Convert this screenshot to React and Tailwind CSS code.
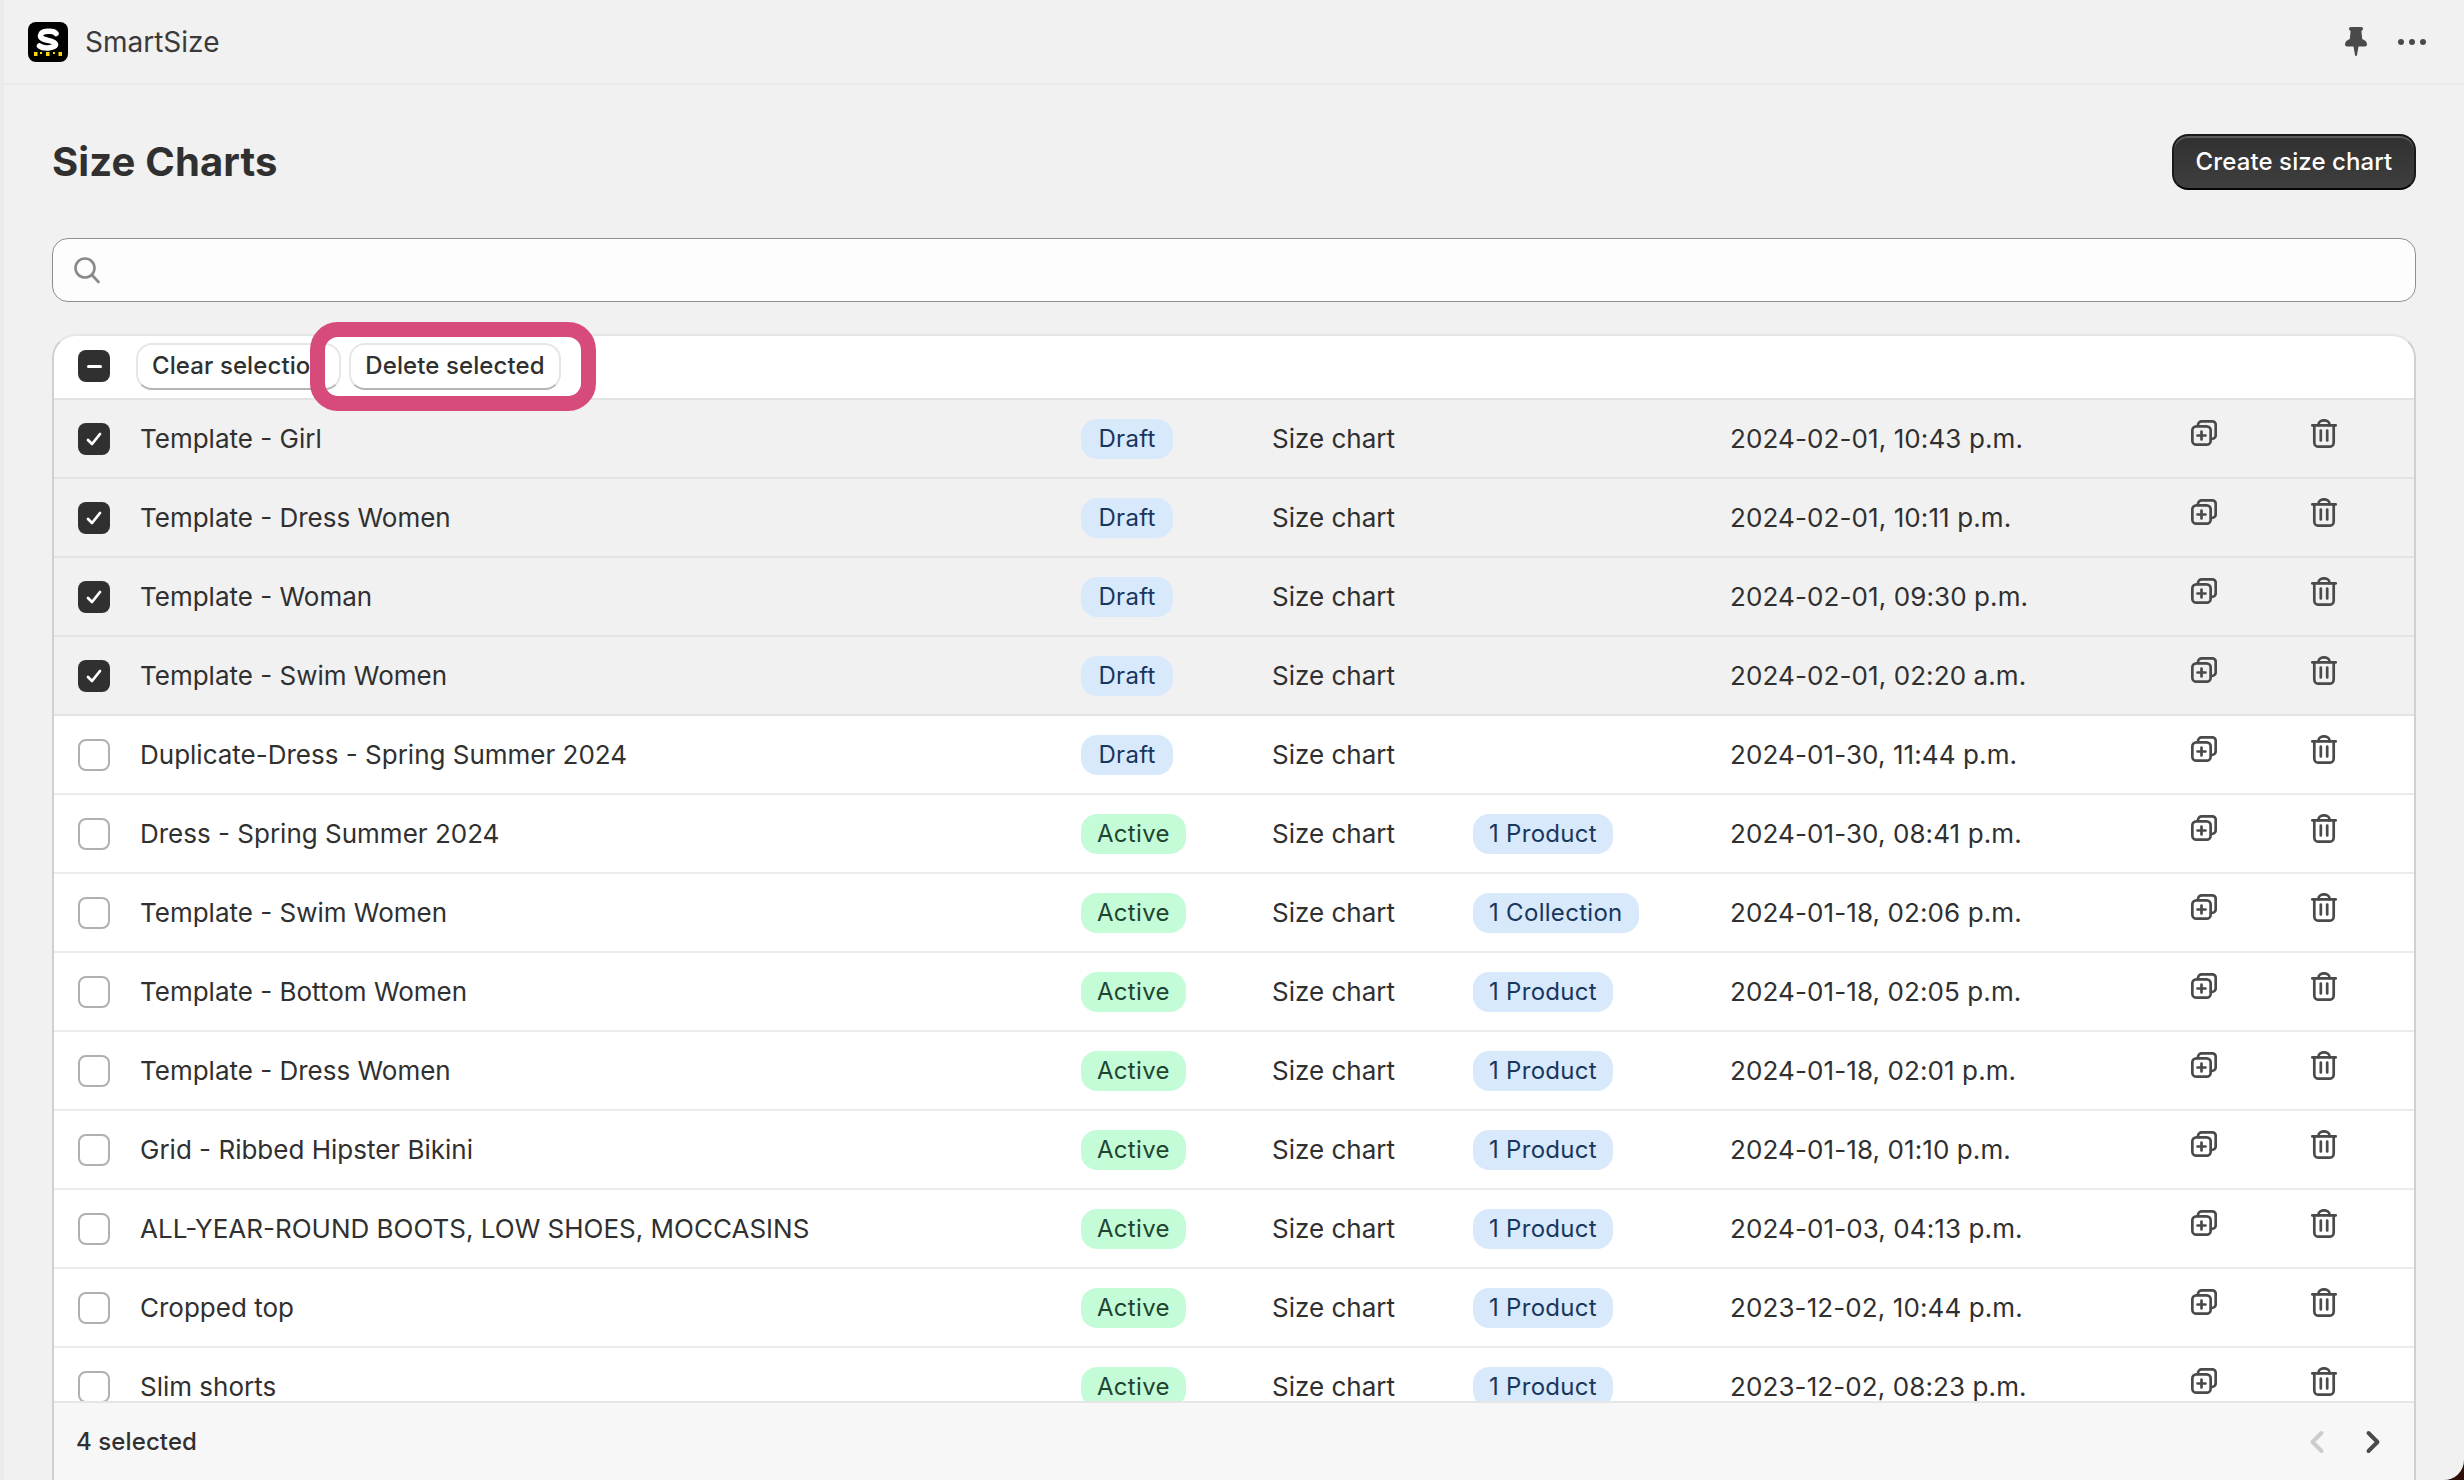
import { ChevronLeft, ChevronRight } from "lucide-react";

const rowGrid = "grid h-[79px] shrink-0 grid-cols-[86px_941px_191px_201px_257px_461px_120px_1fr] items-center border-b-2";

const rows = [
  { name: "Template - Girl", status: "Draft", date: "2024-02-01, 10:43 p.m.", selected: true },
  { name: "Template - Dress Women", status: "Draft", date: "2024-02-01, 10:11 p.m.", selected: true },
  { name: "Template - Woman", status: "Draft", date: "2024-02-01, 09:30 p.m.", selected: true },
  { name: "Template - Swim Women", status: "Draft", date: "2024-02-01, 02:20 a.m.", selected: true },
  { name: "Duplicate-Dress - Spring Summer 2024", status: "Draft", date: "2024-01-30, 11:44 p.m." },
  { name: "Dress - Spring Summer 2024", status: "Active", market: "1 Product", date: "2024-01-30, 08:41 p.m." },
  { name: "Template - Swim Women", status: "Active", market: "1 Collection", date: "2024-01-18, 02:06 p.m." },
  { name: "Template - Bottom Women", status: "Active", market: "1 Product", date: "2024-01-18, 02:05 p.m." },
  { name: "Template - Dress Women", status: "Active", market: "1 Product", date: "2024-01-18, 02:01 p.m." },
  { name: "Grid - Ribbed Hipster Bikini", status: "Active", market: "1 Product", date: "2024-01-18, 01:10 p.m." },
  { name: "ALL-YEAR-ROUND BOOTS, LOW SHOES, MOCCASINS", status: "Active", market: "1 Product", date: "2024-01-03, 04:13 p.m." },
  { name: "Cropped top", status: "Active", market: "1 Product", date: "2023-12-02, 10:44 p.m." },
  { name: "Slim shorts", status: "Active", market: "1 Product", date: "2023-12-02, 08:23 p.m." },
];

function Logo() {
  return (
    <svg width="40" height="40" viewBox="0 0 40 40" className="shrink-0">
      <rect width="40" height="40" rx="8" fill="#000" />
      <path d="M28 11.5C26 8.5 13 8 12.5 13.5C12 19 26 17.5 27.5 22C28.500 26 16 27.500 11.500 24" fill="none" stroke="#fff" strokeWidth="5.500" strokeLinecap="round" />
      <rect x="6" y="30" width="3.500" height="4" fill="#f5d90a" />
      <rect x="12" y="30" width="2" height="2" fill="#f5d90a" />
      <rect x="18" y="30" width="3.500" height="4" fill="#f5d90a" />
      <rect x="25" y="30" width="2" height="2" fill="#f5d90a" />
      <rect x="30.500" y="30" width="3.500" height="4" fill="#f5d90a" />
    </svg>
  );
}

function PinIcon() {
  return (
    <svg width="22" height="29" viewBox="0 0 22 29" className="text-[#4a4a4a]" fill="currentColor">
      <path d="M4 1.800C4 .8 4.800 0 5.800 0h10.400C17.200 0 18 .8 18 1.800c0 1-.7 1.800-1.600 2l.8 8.200c2.600 1 4.800 2.800 4.800 5.400 0 1.200-.9 2-2 2h-6.500L12 28a1 1 0 0 1-2 0L8.500 19.400H2c-1.100 0-2-.8-2-2 0-2.600 2.200-4.400 4.800-5.400l.8-8.200C4.700 3.600 4 2.800 4 1.800z" />
    </svg>
  );
}

function DotsIcon() {
  return (
    <svg width="28" height="8" viewBox="0 0 28 8" className="text-[#4a4a4a]" fill="currentColor">
      <circle cx="3" cy="4" r="3" />
      <circle cx="14" cy="4" r="3" />
      <circle cx="25" cy="4" r="3" />
    </svg>
  );
}

function SearchIcon() {
  return (
    <svg width="28" height="28" viewBox="0 0 28 28" fill="none" stroke="#8a8a8a" strokeWidth="2.600" strokeLinecap="round">
      <circle cx="12" cy="12" r="9.500" />
      <path d="M19 19L25.500 26" />
    </svg>
  );
}

function DuplicateIcon() {
  return (
    <svg width="26" height="26" viewBox="0 0 26 26" fill="none" stroke="#4a4a4a" strokeWidth="2.700" strokeLinecap="round" strokeLinejoin="round">
      <path d="M7 6V5a3.700 3.700 0 0 1 3.700-3.700h10.600A3.400 3.400 0 0 1 24.700 4.700v10.600a3.700 3.700 0 0 1-3.700 3.700h-1" />
      <rect x="1.350" y="6.350" width="18.300" height="18.300" rx="4" />
      <path d="M10.500 11.500v8M6.500 15.500h8" />
    </svg>
  );
}

function TrashIcon() {
  return (
    <svg width="26" height="29" viewBox="0 0 26 29" fill="none" stroke="#4a4a4a" strokeWidth="2.700" strokeLinecap="round" strokeLinejoin="round">
      <path d="M1.300 6.300h23.400" />
      <path d="M7.500 6.300V5.500a5.500 4.200 0 0 1 11 0v.8" />
      <path d="M3.300 6.300V23.500a4.200 4.200 0 0 0 4.200 4.200h11a4.200 4.200 0 0 0 4.200-4.200V6.300" />
      <path d="M9.800 11.500v10M16.200 11.500v10" />
    </svg>
  );
}

function Checkbox({ checked, partial }) {
  if (checked || partial) {
    return (
      <span className="flex h-8 w-8 items-center justify-center rounded-lg bg-[#303030]">
        {checked ? (
          <svg width="20" height="20" viewBox="0 0 20 20" fill="none" stroke="#fff" strokeWidth="2.800" strokeLinecap="round" strokeLinejoin="round">
            <path d="M4 11l4 4 8-10" />
          </svg>
        ) : (
          <span className="h-[3px] w-[15px] rounded-full bg-white" />
        )}
      </span>
    );
  }
  return <span className="block h-8 w-8 rounded-lg border-2 border-[#b0b0b0] bg-white" />;
}

function Badge({ children, green }) {
  return (
    <span className={green ? "inline-flex h-10 items-center rounded-2xl bg-[#c4fcd8] px-4 text-[24px] tracking-[0.3px] text-[#1f4530]" : "inline-flex h-10 items-center rounded-2xl bg-[#d9e9fc] px-4 text-[24px] tracking-[0.3px] text-[#17375c]"}>
      {children}
    </span>
  );
}

function ToolButton({ children, className }) {
  return (
    <button className={"flex h-[47px] items-center rounded-2xl border-2 border-[#e6e6e6] border-b-[#b5b5b5] bg-white px-[14px] text-[24px] font-[450] tracking-[0.1px] text-[#303030] " + className}>
      {children}
    </button>
  );
}

export default function App() {
  return (
    <div className="relative h-screen overflow-hidden bg-[#ebebeb] pl-1 font-['Inter',sans-serif] text-[26px] leading-10 text-[#303030]">
      <div className="flex h-full flex-col bg-[#f1f1f1]">
        <div className="flex h-[85px] shrink-0 items-center justify-between border-b-2 border-[#ebebeb] pl-6 pr-[38px]">
          <div className="flex items-center gap-[17px]">
            <Logo />
            <span className="text-[28px] text-[#3a3a3a]">SmartSize</span>
          </div>
          <div className="flex items-center gap-[31px]">
            <PinIcon />
            <DotsIcon />
          </div>
        </div>

        <div className="flex min-h-0 flex-1 flex-col px-[48px]">
          <div className="mt-[49px] flex h-14 shrink-0 items-center justify-between">
            <h1 className="text-[40px] font-bold leading-[48px] tracking-[0.15px]">Size Charts</h1>
            <button className="flex h-14 w-[244px] items-center justify-center rounded-2xl border-2 border-[#1a1a1a] border-b-[#060606] bg-gradient-to-b from-[#303030] to-[#3f3f3f] text-[24px] font-medium tracking-[0.1px] text-white shadow-[inset_0_2px_0_#5c5c5c]">
              Create size chart
            </button>
          </div>

          <div className="mt-12 flex h-16 shrink-0 items-center rounded-2xl border-[1.5px] border-[#8a8f96] bg-[#fdfdfd] pl-5">
            <SearchIcon />
          </div>

          <div className="mt-8 flex min-h-0 flex-1 flex-col overflow-hidden rounded-t-3xl border-x-2 border-t-2 border-x-[#d0d0d0] border-t-[#e6e6e6] bg-white">
            <div className="flex h-16 shrink-0 items-center border-b-2 border-[#e3e3e3] pb-[2px] pl-6">
              <Checkbox partial />
              <div className="ml-[26px] flex items-center gap-[8px]">
                <ToolButton className="w-[205px] justify-start overflow-hidden whitespace-nowrap">Clear selection</ToolButton>
                <ToolButton className="w-[212px] justify-center whitespace-nowrap">Delete selected</ToolButton>
              </div>
            </div>

            <div className="min-h-0 flex-1 overflow-hidden">
              {rows.map((row, i) => (
                <div key={i} className={row.selected ? rowGrid + " border-[#e3e3e3] bg-[#f1f1f1]" : rowGrid + " border-[#ebebeb] bg-white"}>
                  <div className="pl-6">
                    <Checkbox checked={row.selected} />
                  </div>
                  <div className="truncate">{row.name}</div>
                  <div>
                    <Badge green={row.status === "Active"}>{row.status === "Draft" ? <span className="px-[1.5px]">Draft</span> : row.status}</Badge>
                  </div>
                  <div>Size chart</div>
                  <div>{row.market && <Badge>{row.market}</Badge>}</div>
                  <div className="tracking-[0.1px]">{row.date}</div>
                  <div className="pb-[11px]">
                    <DuplicateIcon />
                  </div>
                  <div className="pb-[11px]">
                    <TrashIcon />
                  </div>
                </div>
              ))}
            </div>

            <div className="flex h-[79px] shrink-0 items-center justify-between border-t-2 border-[#e6e6e6] bg-[#f7f7f7] pl-[22px] pr-[23px] text-[24px] tracking-[0.1px]">
              <span className="font-[450]">4 selected</span>
              <div className="flex items-center gap-5">
                <ChevronLeft size={36} strokeWidth={2.6} className="text-[#cccccc]" />
                <ChevronRight size={36} strokeWidth={2.6} className="text-[#4a4a4a]" />
              </div>
            </div>
          </div>
        </div>
      </div>

      {/* annotation drawn over the toolbar */}
      <div className="absolute left-[310px] top-[322px] h-[89px] w-[286px] rounded-[28px] border-[15px] border-[#d64a7c]" />

      {/* window corner */}
      <div className="absolute bottom-0 right-0 h-5 w-5 bg-[#2e0f08]">
        <div className="h-full w-full rounded-br-[20px] bg-[#f1f1f1]" />
      </div>
    </div>
  );
}
